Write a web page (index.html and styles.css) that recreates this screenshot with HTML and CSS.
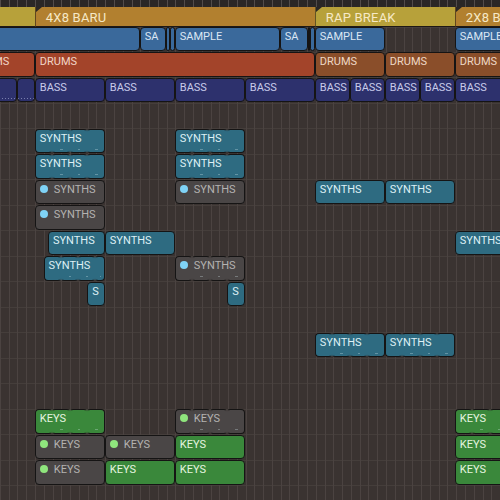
FILE: index.html
```html
<!DOCTYPE html>
<html>
<head>
<meta charset="utf-8">
<link rel="stylesheet" href="styles.css">
</head>
<body>
<div class="arrange">
  <div class="ruler"></div>
  <div class="lane markers">
    <div class="mk olive" style="grid-column:1/33"></div>
    <div class="mk orange" style="grid-column:33/161">4X8 BARU</div>
    <div class="mk olive" style="grid-column:161/225">RAP BREAK</div>
    <div class="mk orange" style="grid-column:225/257">2X8 BARU</div>
  </div>

  <div class="lane">
    <div class="rg blue" style="grid-column:1/81"><div class="segs"><i></i></div></div>
    <div class="rg blue" style="grid-column:81/93"><div class="segs"><i></i></div><span class="lbl">SA</span></div>
    <div class="rg blue" style="grid-column:93/95"><div class="segs"><i></i></div></div>
    <div class="rg blue" style="grid-column:95/97"><div class="segs"><i></i></div></div>
    <div class="rg blue" style="grid-column:97/145"><div class="segs"><i></i></div><span class="lbl">SAMPLE</span></div>
    <div class="rg blue" style="grid-column:145/158"><div class="segs"><i></i></div><span class="lbl">SA</span></div>
    <div class="rg blue" style="grid-column:158/159"><div class="segs"><i></i></div></div>
    <div class="rg blue" style="grid-column:159/161"><div class="segs"><i></i></div></div>
    <div class="rg blue" style="grid-column:161/193"><div class="segs"><i></i></div><span class="lbl">SAMPLE</span></div>
    <div class="rg blue" style="grid-column:225/257"><div class="segs"><i></i></div><span class="lbl">SAMPLE</span></div>
  </div>

  <div class="lane">
    <div class="rg red" style="grid-column:2/33"><div class="segs"><i></i></div><span class="lbl">DRUMS</span></div>
    <div class="rg red" style="grid-column:33/161"><div class="segs"><i></i></div><span class="lbl">DRUMS</span></div>
    <div class="rg brown" style="grid-column:161/193"><div class="segs"><i></i></div><span class="lbl">DRUMS</span></div>
    <div class="rg brown" style="grid-column:193/225"><div class="segs"><i></i></div><span class="lbl">DRUMS</span></div>
    <div class="rg brown" style="grid-column:225/257"><div class="segs"><i></i></div><span class="lbl">DRUMS</span></div>
  </div>

  <div class="lane">
    <div class="rg navy notes" style="grid-column:1/25"><div class="segs"><i></i></div></div>
    <div class="rg navy notes" style="grid-column:25/33"><div class="segs"><i></i></div></div>
    <div class="rg navy" style="grid-column:33/65"><div class="segs"><i></i></div><span class="lbl">BASS</span></div>
    <div class="rg navy" style="grid-column:65/97"><div class="segs"><i></i></div><span class="lbl">BASS</span></div>
    <div class="rg navy" style="grid-column:97/129"><div class="segs"><i></i></div><span class="lbl">BASS</span></div>
    <div class="rg navy" style="grid-column:129/161"><div class="segs"><i></i></div><span class="lbl">BASS</span></div>
    <div class="rg navy" style="grid-column:161/177"><div class="segs"><i></i></div><span class="lbl">BASS</span></div>
    <div class="rg navy" style="grid-column:177/193"><div class="segs"><i></i></div><span class="lbl">BASS</span></div>
    <div class="rg navy" style="grid-column:193/209"><div class="segs"><i></i></div><span class="lbl">BASS</span></div>
    <div class="rg navy" style="grid-column:209/225"><div class="segs"><i></i></div><span class="lbl">BASS</span></div>
    <div class="rg navy" style="grid-column:225/257"><div class="segs"><i></i></div><span class="lbl">BASS</span></div>
  </div>

  <div class="lane"></div>

  <div class="lane">
    <div class="rg teal loop" style="grid-column:33/65"><div class="segs"><i></i><i></i><i></i><i></i></div><span class="lbl">SYNTHS</span></div>
    <div class="rg teal loop" style="grid-column:97/129"><div class="segs"><i></i><i></i><i></i><i></i></div><span class="lbl">SYNTHS</span></div>
  </div>

  <div class="lane">
    <div class="rg teal loop" style="grid-column:33/65"><div class="segs"><i></i><i></i><i></i><i></i></div><span class="lbl">SYNTHS</span></div>
    <div class="rg teal loop" style="grid-column:97/129"><div class="segs"><i></i><i></i><i></i><i></i></div><span class="lbl">SYNTHS</span></div>
  </div>

  <div class="lane">
    <div class="rg muted" style="grid-column:33/65"><div class="segs"><i></i></div><span class="lbl"><b class="dot cyan"></b>SYNTHS</span></div>
    <div class="rg muted" style="grid-column:97/129"><div class="segs"><i></i></div><span class="lbl"><b class="dot cyan"></b>SYNTHS</span></div>
    <div class="rg teal" style="grid-column:161/193"><div class="segs"><i></i></div><span class="lbl">SYNTHS</span></div>
    <div class="rg teal" style="grid-column:193/225"><div class="segs"><i></i></div><span class="lbl">SYNTHS</span></div>
  </div>

  <div class="lane">
    <div class="rg muted" style="grid-column:33/65"><div class="segs"><i></i></div><span class="lbl"><b class="dot cyan"></b>SYNTHS</span></div>
  </div>

  <div class="lane">
    <div class="rg teal" style="grid-column:39/65"><div class="segs"><i></i></div><span class="lbl">SYNTHS</span></div>
    <div class="rg teal" style="grid-column:65/97"><div class="segs"><i></i></div><span class="lbl">SYNTHS</span></div>
    <div class="rg teal" style="grid-column:225/257"><div class="segs"><i></i></div><span class="lbl">SYNTHS</span></div>
  </div>

  <div class="lane">
    <div class="rg teal loop" style="grid-column:37/65"><div class="segs"><i></i><i></i><i></i><i class="half"></i></div><span class="lbl">SYNTHS</span></div>
    <div class="rg muted loop" style="grid-column:97/129"><div class="segs"><i></i><i></i><i></i><i></i></div><span class="lbl"><b class="dot cyan"></b>SYNTHS</span></div>
  </div>

  <div class="lane">
    <div class="rg teal" style="grid-column:57/65"><div class="segs"><i></i></div><span class="lbl">S</span></div>
    <div class="rg teal" style="grid-column:121/129"><div class="segs"><i></i></div><span class="lbl">S</span></div>
  </div>

  <div class="lane"></div>

  <div class="lane">
    <div class="rg teal loop" style="grid-column:161/193"><div class="segs"><i></i><i></i><i></i><i></i></div><span class="lbl">SYNTHS</span></div>
    <div class="rg teal loop" style="grid-column:193/225"><div class="segs"><i></i><i></i><i></i><i></i></div><span class="lbl">SYNTHS</span></div>
  </div>

  <div class="lane"></div>
  <div class="lane"></div>

  <div class="lane">
    <div class="rg green loop" style="grid-column:33/65"><div class="segs"><i></i><i></i><i></i><i></i></div><span class="lbl">KEYS</span></div>
    <div class="rg muted loop" style="grid-column:97/129"><div class="segs"><i></i><i></i><i></i><i></i></div><span class="lbl"><b class="dot lime"></b>KEYS</span></div>
    <div class="rg green loop" style="grid-column:225/257"><div class="segs"><i></i><i></i><i></i><i></i></div><span class="lbl">KEYS</span></div>
  </div>

  <div class="lane">
    <div class="rg muted" style="grid-column:33/65"><div class="segs"><i></i></div><span class="lbl"><b class="dot lime"></b>KEYS</span></div>
    <div class="rg muted" style="grid-column:65/97"><div class="segs"><i></i></div><span class="lbl"><b class="dot lime"></b>KEYS</span></div>
    <div class="rg green" style="grid-column:97/129"><div class="segs"><i></i></div><span class="lbl">KEYS</span></div>
    <div class="rg green" style="grid-column:225/257"><div class="segs"><i></i></div><span class="lbl">KEYS</span></div>
  </div>

  <div class="lane">
    <div class="rg muted" style="grid-column:33/65"><div class="segs"><i></i></div><span class="lbl"><b class="dot lime"></b>KEYS</span></div>
    <div class="rg green" style="grid-column:65/97"><div class="segs"><i></i></div><span class="lbl">KEYS</span></div>
    <div class="rg green" style="grid-column:97/129"><div class="segs"><i></i></div><span class="lbl">KEYS</span></div>
    <div class="rg green" style="grid-column:225/257"><div class="segs"><i></i></div><span class="lbl">KEYS</span></div>
  </div>

  <div class="lane"></div>
</div>
</body>
</html>
```

FILE: styles.css
```css
* { box-sizing: border-box; }
html, body { margin: 0; padding: 0; background: #3a3331; }
body {
  width: 500px;
  height: 500px;
  overflow: hidden;
  font-family: Roboto, "Liberation Sans", sans-serif;
}
.arrange {
  width: 500px;
  height: 500px;
  overflow: hidden;
  background-color: #3a3331;
  background-image:
    repeating-linear-gradient(to right, #4b4341 0, #4b4341 1px, transparent 1px, transparent 8.775px),
    repeating-linear-gradient(to bottom, #453e3b 0, #453e3b 1px, transparent 1px, transparent 25.5px);
  background-size: 600px 600px, 600px 600px;
  background-position: -35.2px 0, 0 1px;
  background-repeat: no-repeat;
}
.ruler {
  height: 7px;
  background-color: #2a2726;
  background-image: repeating-linear-gradient(to right, #524c4a 0, #524c4a 1px, transparent 1px, transparent 8.775px);
  background-size: 600px 100%;
  background-position: -35.2px 0;
  background-repeat: no-repeat;
}
.lane {
  display: grid;
  grid-template-columns: repeat(256, 2.19375px);
  grid-template-rows: 24.5px;
  height: 25.5px;
  margin-left: -35.2px;
}
.markers {
  height: 19.5px;
  grid-template-rows: 19.5px;
}
.mk {
  position: relative;
  border-left: 1px solid rgba(30, 22, 16, 0.55);
  border-bottom: 1px solid #1d1815;
  padding: 3px 0 0 10px;
  font-size: 13px;
  line-height: 15px;
  letter-spacing: 0.2px;
  color: #f6e9c6;
  white-space: nowrap;
  overflow: hidden;
}
.mk::before {
  content: "";
  position: absolute;
  left: 0;
  top: 0;
  border-top: 5px solid #2a2726;
  border-right: 6px solid transparent;
}
.mk.olive { background: #b7a13a; }
.mk.orange { background: #b2802f; }

.rg {
  display: grid;
  grid-template-columns: 100%;
  grid-template-rows: 24.5px;
  min-width: 0;
  overflow: hidden;
}
.segs, .lbl {
  grid-area: 1 / 1;
  min-width: 0;
}
.segs {
  display: flex;
}
.segs i {
  display: block;
  flex: 1 1 0;
  min-width: 0;
  border: 1px solid #151414;
  border-radius: 4px;
  background: var(--bg);
}
.segs i + i {
  border-left-color: var(--bg);
  border-top-left-radius: 3px;
  border-bottom-left-radius: 3px;
}
.segs i:not(:last-child) {
  border-right-color: var(--bg);
  border-top-right-radius: 3px;
  border-bottom-right-radius: 3px;
}
.segs i.half { flex-grow: 0.5; }
.lbl {
  padding: 3px 0 0 5px;
  font-size: 11px;
  line-height: 13px;
  white-space: nowrap;
  overflow: hidden;
  color: var(--fg);
}
.blue { --bg: #3a699b; --fg: #dbe6f3; }
.red { --bg: #a3442a; --fg: #f2d6c8; }
.brown { --bg: #8a4e2a; --fg: #efd8c6; }
.navy { --bg: #2d316d; --fg: #c8cbea; }
.teal { --bg: #2e6b81; --fg: #def0f5; }
.green { --bg: #3a883b; --fg: #e6f5e0; }
.muted { --bg: #4a4646; --fg: #b4b2b1; }

.loop .segs i + i {
  background-image: linear-gradient(to right, transparent 45%, rgba(220, 240, 245, 0.3) 45%, rgba(220, 240, 245, 0.3) 60%, transparent 60%);
  background-size: 100% 1px;
  background-repeat: no-repeat;
  background-position: 0 19px;
}

.dot {
  display: inline-block;
  width: 8px;
  height: 8px;
  border-radius: 50%;
  margin-right: 6px;
  vertical-align: 0;
}
.dot.cyan { background: #7fd3f6; }
.dot.lime { background: #8fe57d; }

.notes .segs i {
  background-image: radial-gradient(circle, rgba(200, 205, 240, 0.5) 0.6px, transparent 0.8px);
  background-size: 3px 3px;
  background-repeat: repeat-x;
  background-position: 2px 18px;
}
```
